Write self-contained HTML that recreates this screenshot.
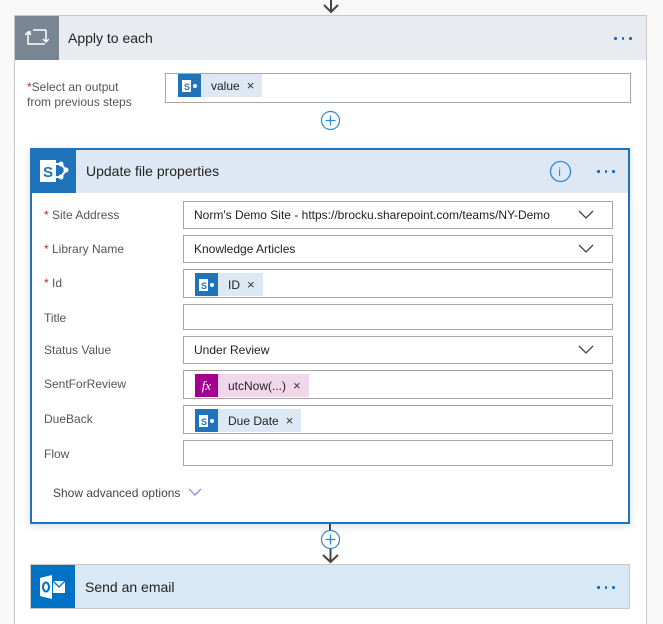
<!DOCTYPE html>
<html style="width:663px;height:624px;overflow:hidden"><head><meta charset="utf-8"><style>
*{margin:0;padding:0;box-sizing:border-box}
body{width:663px;height:624px;overflow:hidden;background:#f8f8f8;font-family:"Liberation Sans",sans-serif;font-size:12px;color:#333;position:relative}
.a{position:absolute}
.box{position:absolute;border:1px solid #a6a6a6;background:#fff}
.lbl{position:absolute;left:44px;font-size:12px;color:#555}
.req{color:#c4262e}
.val{position:absolute;left:10px;font-size:12px;color:#222}
.chev{position:absolute;right:18px}
.tok{position:absolute;left:11px;top:3px;height:23px;background:#dce8f4;display:flex;align-items:center;padding-right:8px;font-size:12px;color:#222}
.tok .ic{width:23px;height:23px;background:#1f73bb;margin-right:10px;display:flex;align-items:center;justify-content:center}
.tok .x{margin-left:7px;font-size:13px;color:#333;font-weight:normal}
.dots{position:absolute;display:flex;gap:5px}
.dots i{width:2.5px;height:2.5px;background:#0a6bc4;border-radius:50%;display:block}
</style></head><body>
<svg class="a" style="left:320px;top:0" width="22" height="15"><path d="M11 0V12M4 5L11 12L18 5" stroke="#444" stroke-width="2" fill="none"/></svg>
<div class="a" style="left:14px;top:15px;width:633px;height:615px;border:1px solid #c8c8c8;background:#fff"></div>
<div class="a" style="left:15px;top:16px;width:631px;height:44px;background:#e8ebef"></div>
<div class="a" style="left:15px;top:16px;width:44px;height:44px;background:#7a8594"></div>
<svg class="a" style="left:25px;top:28px" width="24" height="20"><path d="M3 4V16H20M3 4H6M0 7L3 4 6 7M21 2V14M18 11L21 14 24 11M21 2H8" stroke="#fff" stroke-width="1.5" fill="none"/></svg>
<div class="a" style="left:68px;top:30px;font-size:14px;color:#222">Apply to each</div>
<div class="dots" style="left:614px;top:37px"><i></i><i></i><i></i></div>
<div class="a" style="left:27px;top:80px;color:#555;line-height:15px"><span class="req">*</span>Select an output<br>from previous steps</div>
<div class="box" style="left:165px;top:73px;width:466px;height:30px">
 <div class="tok" style="left:12px;top:0px"><div class="ic"><svg width="15" height="12"><rect x="0" y="0" width="9" height="12" fill="#fff"/><text x="2" y="10" font-size="9" font-weight="bold" fill="#1f73bb" font-family="Liberation Sans">S</text><circle cx="13" cy="6" r="2" fill="#fff"/></svg></div>value<span class="x">×</span></div>
</div>
<svg class="a" style="left:320px;top:110px" width="21" height="21"><circle cx="10.5" cy="10.5" r="9" stroke="#2b88d8" fill="#fff" stroke-width="1.2"/><path d="M10.5 5.5V15.5M5.5 10.5H15.5" stroke="#2b88d8" stroke-width="1.3"/></svg>
<div class="a" style="left:30px;top:148px;width:600px;height:376px;border:2px solid #1f73bb;background:#fff;box-shadow:0 2px 8px rgba(0,0,0,.15)"></div>
<div class="a" style="left:32px;top:150px;width:596px;height:43px;background:#dde8f4"></div>
<div class="a" style="left:32px;top:150px;width:44px;height:43px;background:#1f73bb"></div>
<svg class="a" style="left:38px;top:157px" width="34" height="30"><rect x="2" y="3" width="16" height="22" fill="#fff"/><text x="5" y="20" font-size="15" font-weight="bold" fill="#1f73bb" font-family="Liberation Sans">S</text><path d="M18 7H23L28 13L23 20H18" stroke="#fff" stroke-width="2" fill="none"/><circle cx="23" cy="7" r="2.5" fill="#fff"/><circle cx="28" cy="13" r="2.5" fill="#fff"/><circle cx="23" cy="20" r="2.5" fill="#fff"/></svg>
<div class="a" style="left:86px;top:163px;font-size:14px;color:#222">Update file properties</div>
<svg class="a" style="left:549px;top:160px" width="23" height="23"><circle cx="11.5" cy="11.5" r="10" stroke="#2b88d8" fill="none" stroke-width="1.3"/><text x="9.3" y="16" font-size="12" fill="#2b88d8" font-family="Liberation Sans">i</text></svg>
<div class="dots" style="left:597px;top:170px"><i></i><i></i><i></i></div>

<div class="lbl" style="top:208px"><span class="req">*</span> Site Address</div>
<div class="box" style="left:183px;top:201px;width:430px;height:28px"><div class="val" style="top:6px">Norm's Demo Site - https://brocku.sharepoint.com/teams/NY-Demo</div><svg class="chev" style="top:8px" width="16" height="10"><path d="M1 1L8 8 15 1" stroke="#444" stroke-width="1.3" fill="none"/></svg></div>
<div class="lbl" style="top:242px"><span class="req">*</span> Library Name</div>
<div class="box" style="left:183px;top:235px;width:430px;height:28px"><div class="val" style="top:6px">Knowledge Articles</div><svg class="chev" style="top:8px" width="16" height="10"><path d="M1 1L8 8 15 1" stroke="#444" stroke-width="1.3" fill="none"/></svg></div>
<div class="lbl" style="top:276px"><span class="req">*</span> Id</div>
<div class="box" style="left:183px;top:269px;width:430px;height:29px"><div class="tok"><div class="ic"><svg width="15" height="12"><rect x="0" y="0" width="9" height="12" fill="#fff"/><text x="2" y="10" font-size="9" font-weight="bold" fill="#1f73bb" font-family="Liberation Sans">S</text><circle cx="13" cy="6" r="2" fill="#fff"/></svg></div>ID<span class="x">×</span></div></div>
<div class="lbl" style="top:311px">Title</div>
<div class="box" style="left:183px;top:304px;width:430px;height:26px"></div>
<div class="lbl" style="top:343px">Status Value</div>
<div class="box" style="left:183px;top:336px;width:430px;height:28px"><div class="val" style="top:6px">Under Review</div><svg class="chev" style="top:8px" width="16" height="10"><path d="M1 1L8 8 15 1" stroke="#444" stroke-width="1.3" fill="none"/></svg></div>
<div class="lbl" style="top:377px">SentForReview</div>
<div class="box" style="left:183px;top:370px;width:430px;height:29px"><div class="tok" style="background:#f2d7ec"><div class="ic" style="background:#a4008f;color:#fff;font-family:'Liberation Serif',serif;font-style:italic;font-size:13px">fx</div>utcNow(...)<span class="x">×</span></div></div>
<div class="lbl" style="top:412px">DueBack</div>
<div class="box" style="left:183px;top:405px;width:430px;height:29px"><div class="tok"><div class="ic"><svg width="15" height="12"><rect x="0" y="0" width="9" height="12" fill="#fff"/><text x="2" y="10" font-size="9" font-weight="bold" fill="#1f73bb" font-family="Liberation Sans">S</text><circle cx="13" cy="6" r="2" fill="#fff"/></svg></div>Due Date<span class="x">×</span></div></div>
<div class="lbl" style="top:447px">Flow</div>
<div class="box" style="left:183px;top:440px;width:430px;height:26px"></div>
<div class="a" style="left:53px;top:486px;color:#444">Show advanced options</div>
<svg class="a" style="left:188px;top:488px" width="14" height="8"><path d="M1 1L7 7 13 1" stroke="#8a7ad8" stroke-width="1.2" fill="none"/></svg>
<div class="a" style="left:329px;top:524px;width:2px;height:8px;background:#444"></div>
<svg class="a" style="left:320px;top:530px" width="21" height="34"><circle cx="10.5" cy="9.5" r="9" stroke="#2b88d8" fill="#fff" stroke-width="1.2"/><path d="M10.5 4.5V14.5M5.5 9.5H15.5" stroke="#2b88d8" stroke-width="1.3"/><path d="M10.5 19V32M3 25L10.5 32 18 25" stroke="#444" stroke-width="2" fill="none"/></svg>
<div class="a" style="left:30px;top:564px;width:600px;height:45px;border:1px solid #c8c8c8;background:#d9e8f5"></div>
<div class="a" style="left:31px;top:565px;width:44px;height:43px;background:#0072c6"></div>
<svg class="a" style="left:38px;top:573px" width="30" height="28"><path d="M2 5L14 2V26L2 23Z" fill="#fff"/><ellipse cx="8" cy="14" rx="3" ry="4.5" fill="none" stroke="#0072c6" stroke-width="2"/><rect x="15" y="8" width="12" height="12" fill="#fff"/><path d="M15 8L21 14 27 8" stroke="#0072c6" stroke-width="1.3" fill="none"/></svg>
<div class="a" style="left:85px;top:579px;font-size:14px;color:#222">Send an email</div>
<div class="dots" style="left:597px;top:586px"><i></i><i></i><i></i></div>
</body></html>
